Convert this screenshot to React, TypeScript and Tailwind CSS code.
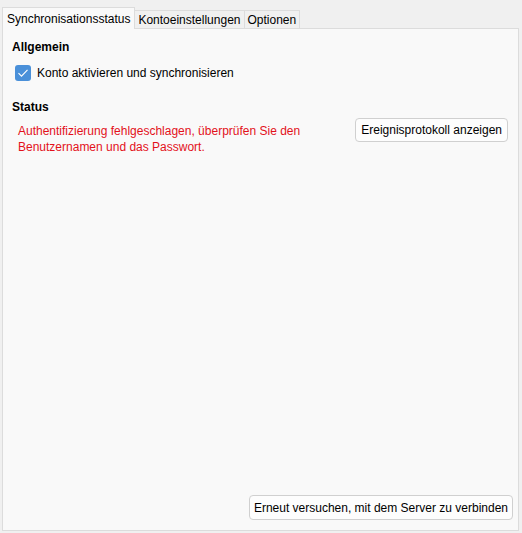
import React from 'react';

const font = { fontFamily: '"Segoe UI", "Liberation Sans", Arial, sans-serif' };

function Tab({ label, active }: { label: string; active?: boolean }) {
  return active ? (
    <div className="relative z-10 -mb-px h-[22px] px-[4px] flex items-center bg-[#f9f9f9] border border-b-0 border-[#dcdcdc] text-[12px] text-black">
      {label}
    </div>
  ) : (
    <div className="h-[18px] mt-[4px] px-[3px] flex items-center bg-[#f0f0f0] border border-l-0 border-b-0 border-[#dcdcdc] text-[12px] text-black">
      {label}
    </div>
  );
}

export default function App() {
  return (
    <div className="w-[522px] h-[533px] bg-[#f0f0f0] flex flex-col pt-[6px] px-[2px] pb-[2px]" style={font}>
      {/* tab bar */}
      <div className="flex items-end h-[22px]">
        <Tab label="Synchronisationsstatus" active />
        <Tab label="Kontoeinstellungen" />
        <Tab label="Optionen" />
      </div>

      {/* panel */}
      <div className="flex-1 bg-[#f9f9f9] border border-[#dcdcdc] mr-[1px] flex flex-col px-[9px] pt-[10px] pb-[9px]">
        <div className="text-[12px] font-bold text-black leading-[16px]">Allgemein</div>
        <label className="flex items-center gap-[6px] mt-[10px] ml-[3px] text-[12px] text-black leading-[16px]">
          <span className="w-[16px] h-[16px] rounded-[3px] bg-[#4a90d9] flex items-center justify-center">
            <svg width="12" height="12" viewBox="0 0 12 12" fill="none">
              <path d="M1.5 6.2 L4.5 9.2 L10.5 2.8" stroke="white" strokeWidth="1.1" />
            </svg>
          </span>
          Konto aktivieren und synchronisieren
        </label>

        <div className="text-[12px] font-bold text-black leading-[16px] mt-[18px]">Status</div>
        <div className="flex items-start justify-between mt-[3px]">
          <div className="ml-[6px] mt-[5px] text-[12px] leading-[16px] text-[#e3111b]">
            Authentifizierung fehlgeschlagen, überprüfen Sie den
            <br />
            Benutzernamen und das Passwort.
          </div>
          <button className="h-[24px] px-[5px] mr-[1px] bg-[#fdfdfd] border border-[#d0d0d0] rounded-[4px] text-[12px] text-black">
            Ereignisprotokoll anzeigen
          </button>
        </div>

        <div className="flex-1" />
        <div className="flex justify-end">
          <button className="h-[25px] px-[4px] -mr-[4px] mb-[1px] bg-[#fdfdfd] border border-[#d0d0d0] rounded-[4px] text-[12px] text-black">
            Erneut versuchen, mit dem Server zu verbinden
          </button>
        </div>
      </div>
    </div>
  );
}
